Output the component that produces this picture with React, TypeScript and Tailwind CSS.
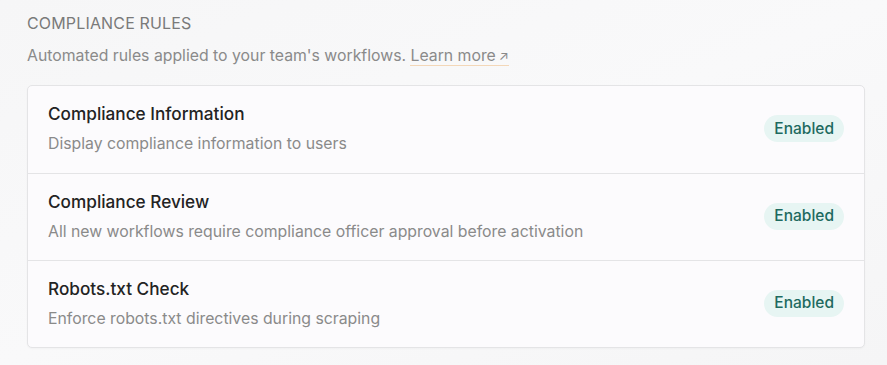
import React from 'react';

type Rule = {
  title: string;
  description: string;
  status: string;
};

const rules: Rule[] = [
  { title: 'Compliance Information', description: 'Display compliance information to users', status: 'Enabled' },
  {
    title: 'Compliance Review',
    description: 'All new workflows require compliance officer approval before activation',
    status: 'Enabled',
  },
  { title: 'Robots.txt Check', description: 'Enforce robots.txt directives during scraping', status: 'Enabled' },
];

const App: React.FC = () => {
  return (
    <div className="min-h-screen w-full bg-gradient-to-br from-[#f6f6f7] via-[#f9f9fa] to-[#f5f5f6] px-[27px] pt-[12px] font-['Inter',sans-serif]">
      {/* Section header */}
      <h2 className="text-[16px] leading-[22px] tracking-[0.01em] text-[#7a7a7a] uppercase">Compliance Rules</h2>
      <p className="mt-[11px] text-[15.8px] leading-[22px] text-[#8a8a8a]">
        Automated rules applied to your team's workflows.{' '}
        <a href="#" className="border-b border-[#f3d7b8] text-[#8a8a8a]">
          Learn more
          <span className="ml-[3px] text-[13px]">↗</span>
        </a>
      </p>

      {/* Rules list */}
      <div className="mt-[18px] w-[838px] overflow-hidden rounded-[5px] border border-[#e4e4e6] bg-[#fcfbfd] shadow-[0_1px_2px_rgba(0,0,0,0.03)]">
        {rules.map((rule, i) => (
          <div
            key={rule.title}
            className={`flex h-[87px] items-center justify-between px-[20px] pt-[16px] pb-[18px] ${i > 0 ? 'border-t border-[#e4e4e6]' : ''}`}
          >
            <div className="flex flex-col">
              <span className="text-[17.2px] leading-[24px] font-medium text-[#232323]">{rule.title}</span>
              <span className="mt-[7px] text-[15.8px] leading-[22px] text-[#8a8a8a]">{rule.description}</span>
            </div>
            <span className="rounded-full bg-[#e7f5f3] px-[10px] py-[2.5px] text-[15.5px] leading-[22px] font-medium text-[#1e6a5f]">
              {rule.status}
            </span>
          </div>
        ))}
      </div>
    </div>
  );
};

export default App;
